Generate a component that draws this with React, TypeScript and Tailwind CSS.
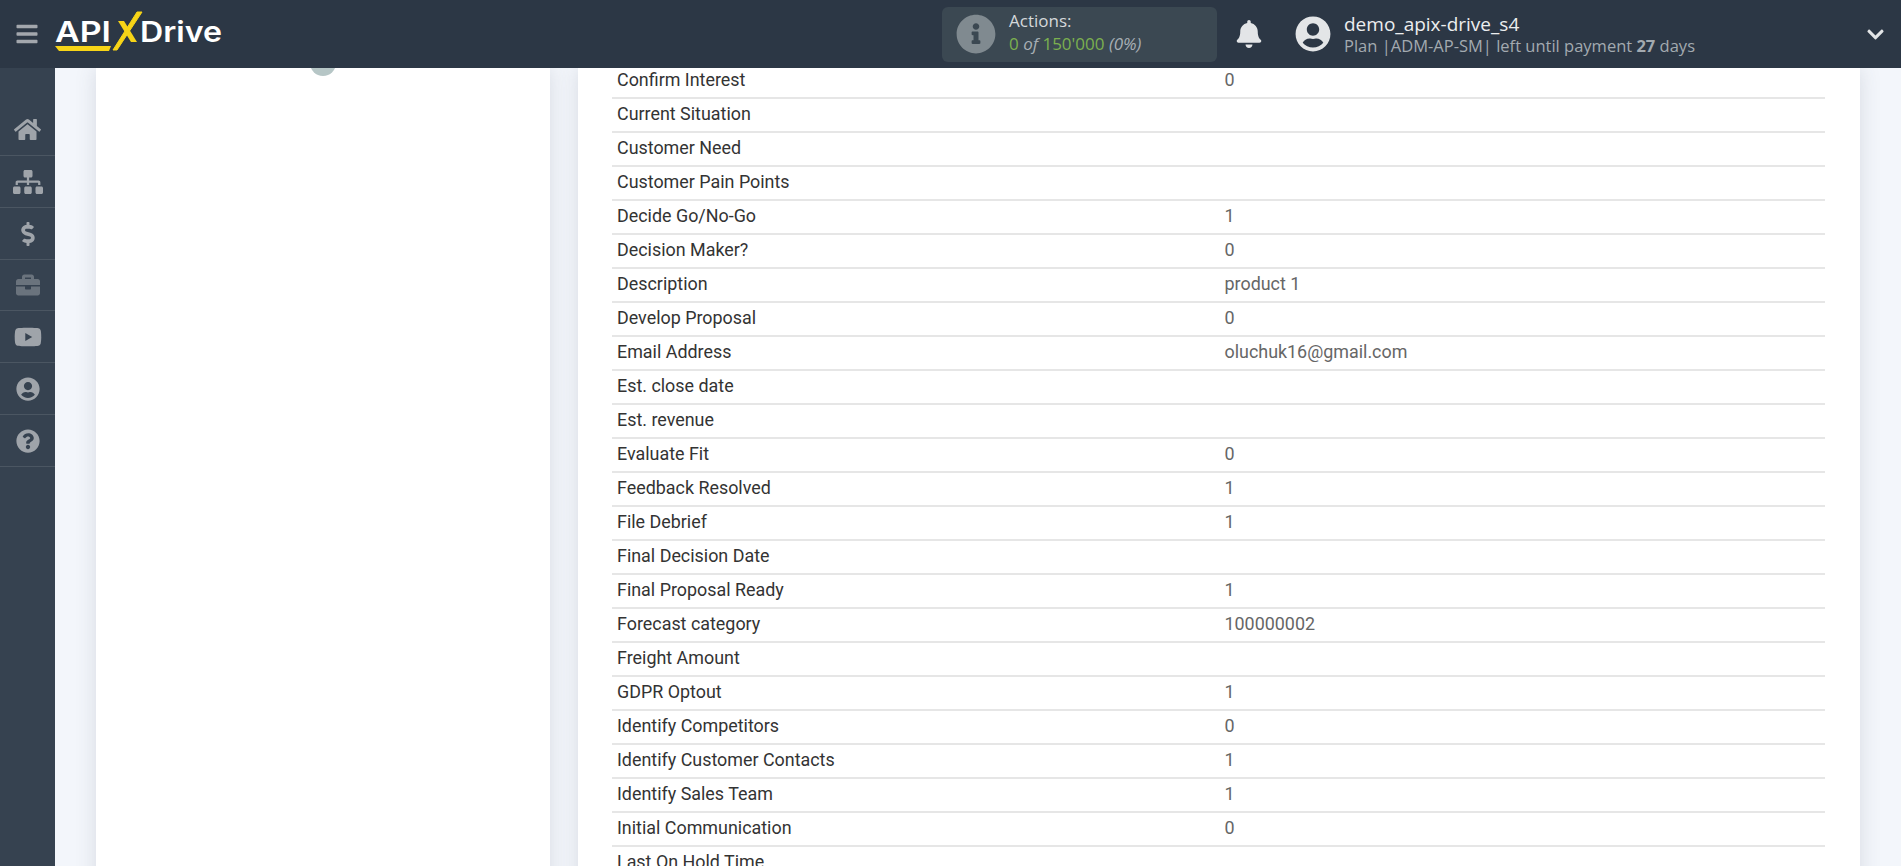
import { FC } from 'react';
import {
    FaBars,
    FaBell,
    FaBriefcase,
    FaChevronDown,
    FaDollarSign,
    FaHome,
    FaInfoCircle,
    FaQuestionCircle,
    FaSitemap,
    FaUserCircle,
    FaYoutube,
} from 'react-icons/fa';

const rows: [string, string][] = [
    ['Confirm Interest', '0'],
    ['Current Situation', ''],
    ['Customer Need', ''],
    ['Customer Pain Points', ''],
    ['Decide Go/No-Go', '1'],
    ['Decision Maker?', '0'],
    ['Description', 'product 1'],
    ['Develop Proposal', '0'],
    ['Email Address', 'oluchuk16@gmail.com'],
    ['Est. close date', ''],
    ['Est. revenue', ''],
    ['Evaluate Fit', '0'],
    ['Feedback Resolved', '1'],
    ['File Debrief', '1'],
    ['Final Decision Date', ''],
    ['Final Proposal Ready', '1'],
    ['Forecast category', '100000002'],
    ['Freight Amount', ''],
    ['GDPR Optout', '1'],
    ['Identify Competitors', '0'],
    ['Identify Customer Contacts', '1'],
    ['Identify Sales Team', '1'],
    ['Initial Communication', '0'],
    ['Last On Hold Time', ''],
];

const Logo: FC = () => (
    <svg width="172" height="50" viewBox="0 0 172 50" className="ml-[16px] shrink-0">
        <text x="0" y="33" fontFamily="Inter, sans-serif" fontWeight="600" fontSize="29" fill="#fff" textLength="56" lengthAdjust="spacingAndGlyphs">
            API
        </text>
        <text x="85" y="33" fontFamily="Inter, sans-serif" fontWeight="600" fontSize="29" fill="#fff" textLength="82" lengthAdjust="spacingAndGlyphs">
            Drive
        </text>
        <polygon points="0,37 56,37 54,42 4,42" fill="#f7d417" />
        <polygon points="58,41 82,3 87,3 62,41" fill="#f7d417" strokeWidth="1" stroke="#f7d417" />
        <polygon points="63,12 69,12 82,33 76,33" fill="#f7d417" />
    </svg>
);

const sideIcons = [
    { icon: <FaHome size={27} />, h: 'h-[52px]' },
    { icon: <FaSitemap size={30} />, h: 'h-[52px]' },
    { icon: <FaDollarSign size={24} />, h: 'h-[52px]' },
    { icon: <FaBriefcase size={24} className="opacity-50" />, h: 'h-[51px]' },
    { icon: <FaYoutube size={28} />, h: 'h-[52px]' },
    { icon: <FaUserCircle size={24} />, h: 'h-[52px]' },
    { icon: <FaQuestionCircle size={24} />, h: 'h-[52px]' },
];

const App: FC = () => {
    return (
        <div className="flex h-[866px] w-[1901px] flex-col overflow-hidden bg-[#f3f6fb] font-['Open_Sans',sans-serif]">
            <header className="relative z-10 flex h-[68px] shrink-0 items-center bg-[#2c3745]">
                <FaBars size={24} className="ml-[15px] text-[#a3a7ad]" />
                <Logo />
                <div className="ml-[715px] flex h-[55px] w-[275px] items-center rounded-md bg-[#3b4852]">
                    <FaInfoCircle size={40} className="ml-[14px] text-[#808a90]" />
                    <div className="ml-[13px] -mt-[5px] leading-[23px]">
                        <div className="text-[17px] text-[#d5d8db]">Actions:</div>
                        <div className="text-[17px] text-[#7bb04f]">
                            0 <i className="text-[#a7afb5]">of</i> 150'000 <i className="text-[#a7afb5]">(0%)</i>
                        </div>
                    </div>
                </div>
                <FaBell size={28} className="ml-[18px] text-[#e3e5e7]" />
                <FaUserCircle size={36} className="ml-[32px] text-[#e3e5e7]" />
                <div className="ml-[13px] mt-[2px] leading-[22px]">
                    <div className="text-[19px] text-[#eceeef]">demo_apix-drive_s4</div>
                    <div className="text-[16.5px] text-[#a3aab0]">
                        Plan |ADM-AP-SM| left until payment <b>27</b> days
                    </div>
                </div>
                <FaChevronDown size={19} className="ml-auto mr-[16px] text-[#e3e5e7]" />
            </header>
            <div className="flex min-h-0 flex-1">
                <aside className="w-[55px] shrink-0 bg-[#364250] pt-[36px]">
                    {sideIcons.map((item, i) => (
                        <div key={i} className={`flex items-center justify-center border-b border-[#4b5662] text-[#9fa4aa] ${item.h}`}>
                            {item.icon}
                        </div>
                    ))}
                </aside>
                <main className="flex min-w-0 flex-1 pl-[41px]">
                    <section className="h-[900px] w-[454px] shrink-0 bg-white shadow-[0_0_20px_rgba(60,70,90,0.15)]">
                        <div className="ml-[214px] -mt-[18px] h-[26px] w-[26px] rounded-full bg-[#b6c6c6]" />
                    </section>
                    <section className="ml-[28px] h-[900px] w-[1282px] shrink-0 bg-white pl-[34px] shadow-[0_0_20px_rgba(60,70,90,0.15)]">
                        <div className="-mt-[3px] w-[1213px] font-['Roboto',sans-serif] text-[17.9px]">
                            {rows.map(([name, value]) => (
                                <div key={name} className="flex h-[34px] items-center border-b-2 border-[#e6e6e6] pb-[1px]">
                                    <div className="w-[612.5px] pl-[5px] text-[#333]">{name}</div>
                                    <div className="text-[#666]">{value}</div>
                                </div>
                            ))}
                        </div>
                    </section>
                </main>
            </div>
        </div>
    );
};

export default App;
